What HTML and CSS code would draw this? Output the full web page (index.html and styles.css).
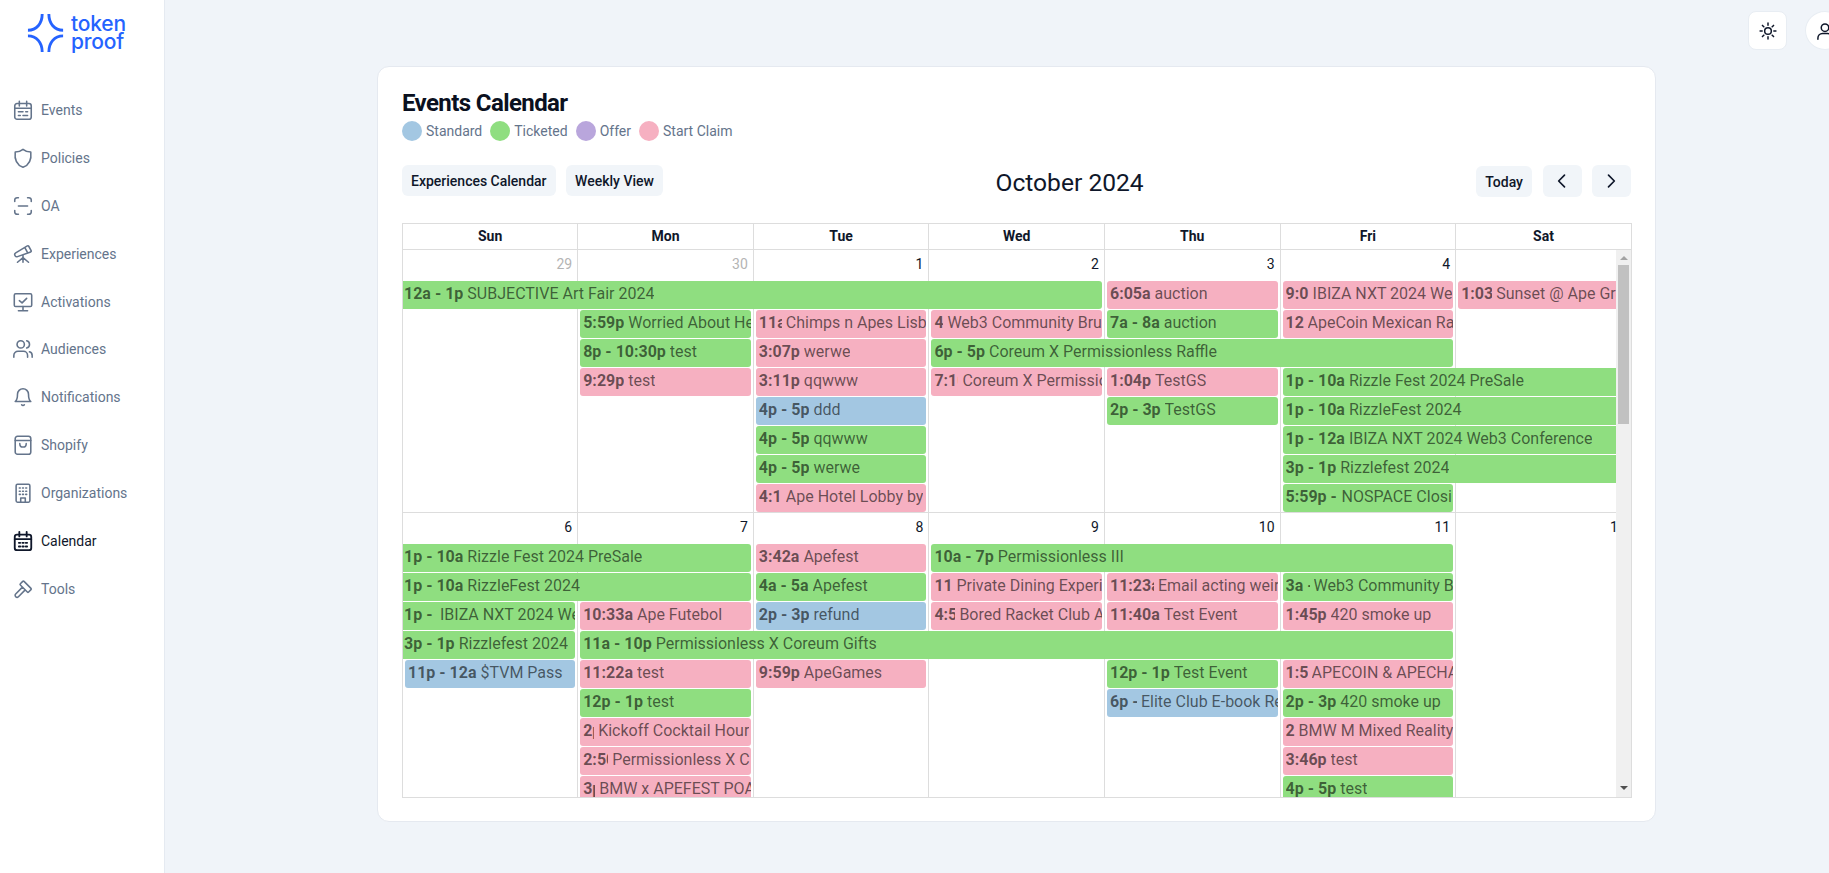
FILE: index.html
```html
<!DOCTYPE html>
<html lang="en">
<head>
<meta charset="utf-8">
<title>Events Calendar</title>
<link rel="stylesheet" href="styles.css">
</head>
<body>
<div class="app">
  <aside class="sidebar">
    <div class="logo">
      <svg class="logo-mark" viewBox="0 0 40 42" fill="none" stroke="#2563ff" stroke-width="3" stroke-linecap="butt">
        <path d="M16 0C16 10 10 17 1 17"/>
        <path d="M23 0C23 10 29 17 38 17"/>
        <path d="M1 23C10 23 16 30 16 40"/>
        <path d="M38 23C29 23 23 30 23 40"/>
      </svg>
      <div class="logo-text">token<br>proof</div>
    </div>
    <nav class="nav">
      <a class="nav-item">
        <svg class="nav-icon" viewBox="0 0 24 24"><rect x="3" y="5" width="18" height="17" rx="2.5"/><path d="M8 2.5v5M16 2.5v5M3 10h18M7 14h5M15 14h2M7 18h2M12 18h5"/></svg>
        <span>Events</span>
      </a>
      <a class="nav-item">
        <svg class="nav-icon" viewBox="0 0 24 24"><path d="M12 2.500c2.500 2 5.500 3 8.500 3C21.500 14 19 19.500 12 22 5 19.500 2.500 14 3.500 5.500c3 0 6-1 8.500-3z"/></svg>
        <span>Policies</span>
      </a>
      <a class="nav-item">
        <svg class="nav-icon" viewBox="0 0 24 24"><path d="M3 7V5.500A2.500 2.500 0 0 1 5.500 3H7M17 3h1.500A2.500 2.500 0 0 1 21 5.500V7M21 17v1.500a2.500 2.500 0 0 1-2.500 2.500H17M7 21H5.500A2.500 2.500 0 0 1 3 18.500V17M7 12h10"/></svg>
        <span>OA</span>
      </a>
      <a class="nav-item">
        <svg class="nav-icon" viewBox="0 0 24 24"><path d="M6 21l6-5 6 5M12 13v8M3.294 13.678l.166.281c.52.88 1.624 1.265 2.605.91l14.242-5.165a1.023 1.023 0 0 0 .565-1.456l-2.62-4.705a1.087 1.087 0 0 0-1.447-.42l-.056.032-12.694 7.618c-1.02.613-1.357 1.897-.76 2.905zM14 5l3 5.500"/></svg>
        <span>Experiences</span>
      </a>
      <a class="nav-item">
        <svg class="nav-icon" viewBox="0 0 24 24"><rect x="2.500" y="3" width="19" height="14" rx="1.500"/><path d="M8 10.500l3 2.500 5-5M12 17v4M7 21.500h10"/></svg>
        <span>Activations</span>
      </a>
      <a class="nav-item">
        <svg class="nav-icon" viewBox="0 0 24 24"><circle cx="9.500" cy="7" r="4"/><path d="M2 21v-2a4.500 4.500 0 0 1 4.500-4.500h6A4.500 4.500 0 0 1 17 19v2M16 3.100a4 4 0 0 1 0 7.800M22 21v-2a4 4 0 0 0-3-3.900"/></svg>
        <span>Audiences</span>
      </a>
      <a class="nav-item">
        <svg class="nav-icon" viewBox="0 0 24 24"><path d="M6 9a6 6 0 0 1 12 0c0 6 2.500 8 2.500 8h-17S6 15 6 9zM10.500 20.500a2 2 0 0 0 3 0"/></svg>
        <span>Notifications</span>
      </a>
      <a class="nav-item">
        <svg class="nav-icon" viewBox="0 0 24 24"><rect x="3.500" y="2.500" width="17" height="19.500" rx="2.500"/><path d="M3.500 7h17M8.500 10.500c0 5 7 5 7 0"/></svg>
        <span>Shopify</span>
      </a>
      <a class="nav-item">
        <svg class="nav-icon" viewBox="0 0 24 24"><rect x="4.500" y="2.500" width="15" height="19.500" rx="1.500"/><path d="M8 6.500h1M11.500 6.500h1M15 6.500h1M8 10h1M11.500 10h1M15 10h1M8 13.500h1M11.500 13.500h1M15 13.500h1M9.500 22v-4.500h5V22"/></svg>
        <span>Organizations</span>
      </a>
      <a class="nav-item is-active">
        <svg class="nav-icon" viewBox="0 0 24 24"><rect x="3" y="5" width="18" height="17" rx="2.500"/><path d="M8 2v5M16 2v5M3 10h18M7.500 14h1.500M11.300 14h1.500M15 14h1.500M7.500 18h1.500M11.300 18h1.500M15 18h1.500"/></svg>
        <span>Calendar</span>
      </a>
      <a class="nav-item">
        <svg class="nav-icon" viewBox="0 0 24 24"><path d="M11.414 10l-7.383 7.418a2.091 2.091 0 0 0 0 2.967 2.110 2.110 0 0 0 2.976 0l7.407-7.385M18.121 15.293l2.586-2.586a1 1 0 0 0 0-1.414l-7.586-7.586a1 1 0 0 0-1.414 0l-2.586 2.586a1 1 0 0 0 0 1.414l7.586 7.586a1 1 0 0 0 1.414 0z"/></svg>
        <span>Tools</span>
      </a>
    </nav>
  </aside>
  <main class="main">
    <header class="topbar">
      <button class="top-btn">
        <svg class="top-icon" viewBox="0 0 24 24"><circle cx="12" cy="12" r="4"/><path d="M12 2.500v2.500M12 19v2.500M2.500 12H5M19 12h2.500M5.300 5.300l1.700 1.700M17 17l1.700 1.700M5.300 18.700L7 17M17 7l1.700-1.700"/></svg>
      </button>
      <button class="avatar">
        <svg class="top-icon" viewBox="0 0 24 24"><circle cx="12" cy="8" r="4.500"/><path d="M3.500 22v-1.500A5.500 5.500 0 0 1 9 15h6a5.500 5.500 0 0 1 5.500 5.500V22"/></svg>
      </button>
    </header>
    <section class="card">
      <h1 class="card-title">Events Calendar</h1>
      <div class="legend">
        <span class="legend-item"><i class="dot blue"></i>Standard</span>
        <span class="legend-item"><i class="dot green"></i>Ticketed</span>
        <span class="legend-item"><i class="dot purple"></i>Offer</span>
        <span class="legend-item"><i class="dot pink"></i>Start Claim</span>
      </div>
      <div class="toolbar">
        <div class="tool-group group-start">
          <button class="btn">Experiences Calendar</button>
          <button class="btn">Weekly View</button>
        </div>
        <h2 class="month">October 2024</h2>
        <div class="tool-group">
          <button class="btn btn-today">Today</button>
          <button class="btn btn-icon"><svg class="chev" viewBox="0 0 24 24"><path d="M15 5l-7 7 7 7"/></svg></button>
          <button class="btn btn-icon"><svg class="chev" viewBox="0 0 24 24"><path d="M9 5l7 7-7 7"/></svg></button>
        </div>
      </div>
      <div class="cal">
        <div class="cal-head">
          <div class="head-cell">Sun</div><div class="head-cell">Mon</div><div class="head-cell">Tue</div><div class="head-cell">Wed</div><div class="head-cell">Thu</div><div class="head-cell">Fri</div><div class="head-cell">Sat</div>
        </div>
        <div class="cal-body">
          <div class="view">
            <div class="week week-a">
              <div class="day d1 other">29</div><div class="day d2 other">30</div><div class="day d3">1</div><div class="day d4">2</div><div class="day d5">3</div><div class="day d6">4</div><div class="day d7"></div>

              <div class="ev green r1 c1 s4 cl"><b>12a - 1p</b><span>SUBJECTIVE Art Fair 2024</span></div>
              <div class="ev pink r1 c5"><b>6:05a</b><span>auction</span></div>
              <div class="ev pink r1 c6"><b style="width:23px">9:0</b><span>IBIZA NXT 2024 We</span></div>
              <div class="ev pink r1 c7"><b style="width:31px">1:03</b><span>Sunset @ Ape Gra</span></div>

              <div class="ev green r2 c2"><b>5:59p</b><span>Worried About He</span></div>
              <div class="ev pink r2 c3"><b style="width:23px">11a</b><span>Chimps n Apes Lisb</span></div>
              <div class="ev pink r2 c4"><b style="width:9px">4</b><span>Web3 Community Bru</span></div>
              <div class="ev green r2 c5"><b>7a - 8a</b><span>auction</span></div>
              <div class="ev pink r2 c6"><b style="width:18px">12</b><span>ApeCoin Mexican Ra</span></div>

              <div class="ev green r3 c2"><b>8p - 10:30p</b><span>test</span></div>
              <div class="ev pink r3 c3"><b>3:07p</b><span>werwe</span></div>
              <div class="ev green r3 c4 s3"><b>6p - 5p</b><span>Coreum X Permissionless Raffle</span></div>

              <div class="ev pink r4 c2"><b>9:29p</b><span>test</span></div>
              <div class="ev pink r4 c3"><b>3:11p</b><span>qqwww</span></div>
              <div class="ev pink r4 c4"><b style="width:24px">7:10</b><span>Coreum X Permissio</span></div>
              <div class="ev pink r4 c5"><b>1:04p</b><span>TestGS</span></div>
              <div class="ev green r4 c6 s2 cr"><b>1p - 10a</b><span>Rizzle Fest 2024 PreSale</span></div>

              <div class="ev blue r5 c3"><b>4p - 5p</b><span>ddd</span></div>
              <div class="ev green r5 c5"><b>2p - 3p</b><span>TestGS</span></div>
              <div class="ev green r5 c6 s2 cr"><b>1p - 10a</b><span>RizzleFest 2024</span></div>

              <div class="ev green r6 c3"><b>4p - 5p</b><span>qqwww</span></div>
              <div class="ev green r6 c6 s2 cr"><b>1p - 12a</b><span>IBIZA NXT 2024 Web3 Conference</span></div>

              <div class="ev green r7 c3"><b>4p - 5p</b><span>werwe</span></div>
              <div class="ev green r7 c6 s2 cr"><b>3p - 1p</b><span>Rizzlefest 2024</span></div>

              <div class="ev pink r8 c3"><b style="width:23px">4:15</b><span>Ape Hotel Lobby by</span></div>
              <div class="ev green r8 c6"><b style="width:52px">5:59p -</b><span>NOSPACE Closi</span></div>
            </div>
            <div class="week week-b">
              <div class="day d1">6</div><div class="day d2">7</div><div class="day d3">8</div><div class="day d4">9</div><div class="day d5">10</div><div class="day d6">11</div><div class="day d7">12</div>

              <div class="ev green r1 c1 s2 cl"><b>1p - 10a</b><span>Rizzle Fest 2024 PreSale</span></div>
              <div class="ev pink r1 c3"><b>3:42a</b><span>Apefest</span></div>
              <div class="ev green r1 c4 s3"><b>10a - 7p</b><span>Permissionless III</span></div>

              <div class="ev green r2 c1 s2 cl"><b>1p - 10a</b><span>RizzleFest 2024</span></div>
              <div class="ev green r2 c3"><b>4a - 5a</b><span>Apefest</span></div>
              <div class="ev pink r2 c4"><b style="width:18px">11:</b><span>Private Dining Experi</span></div>
              <div class="ev pink r2 c5"><b style="width:44px">11:23a</b><span>Email acting weir</span></div>
              <div class="ev green r2 c6"><b style="width:24px">3a -</b><span>Web3 Community B</span></div>

              <div class="ev green r3 c1 cl"><b style="width:32px">1p -</b><span>IBIZA NXT 2024 We</span></div>
              <div class="ev pink r3 c2"><b>10:33a</b><span>Ape Futebol</span></div>
              <div class="ev blue r3 c3"><b>2p - 3p</b><span>refund</span></div>
              <div class="ev pink r3 c4"><b style="width:21px">4:5</b><span>Bored Racket Club A</span></div>
              <div class="ev pink r3 c5"><b>11:40a</b><span>Test Event</span></div>
              <div class="ev pink r3 c6"><b>1:45p</b><span>420 smoke up</span></div>

              <div class="ev green r4 c1 cl"><b>3p - 1p</b><span>Rizzlefest 2024</span></div>
              <div class="ev green r4 c2 s5"><b>11a - 10p</b><span>Permissionless X Coreum Gifts</span></div>

              <div class="ev blue r5 c1"><b>11p - 12a</b><span>$TVM Pass</span></div>
              <div class="ev pink r5 c2"><b>11:22a</b><span>test</span></div>
              <div class="ev pink r5 c3"><b>9:59p</b><span>ApeGames</span></div>
              <div class="ev green r5 c5"><b>12p - 1p</b><span>Test Event</span></div>
              <div class="ev pink r5 c6"><b style="width:22px">1:5</b><span>APECOIN &amp; APECHA</span></div>

              <div class="ev green r6 c2"><b>12p - 1p</b><span>test</span></div>
              <div class="ev blue r6 c5"><b style="width:27px">6p -</b><span>Elite Club E-book Re</span></div>
              <div class="ev green r6 c6"><b>2p - 3p</b><span>420 smoke up</span></div>

              <div class="ev pink r7 c2"><b style="width:11px">2p</b><span>Kickoff Cocktail Hour</span></div>
              <div class="ev pink r7 c6"><b style="width:9px">2</b><span>BMW M Mixed Reality</span></div>

              <div class="ev pink r8 c2"><b style="width:25px">2:50</b><span>Permissionless X C</span></div>
              <div class="ev pink r8 c6"><b>3:46p</b><span>test</span></div>

              <div class="ev pink r9 c2"><b style="width:12px">3p</b><span>BMW x APEFEST POA</span></div>
              <div class="ev green r9 c6"><b>4p - 5p</b><span>test</span></div>
            </div>
          </div>
          <div class="scrollbar">
            <div class="sb-arrow up"></div>
            <div class="sb-thumb"></div>
            <div class="sb-arrow down"></div>
          </div>
        </div>
      </div>
    </section>
  </main>
</div>
</body>
</html>
```
FILE: styles.css
```css
* { box-sizing: border-box; }
html, body { margin: 0; height: 100%; overflow: hidden; }
body { font-family: Roboto, "Liberation Sans", sans-serif; color: #0f172a; background: #f0f4f9; }
.app { display: flex; width: 1829px; height: 873px; overflow: hidden; }

/* sidebar */
.sidebar { width: 165px; flex-shrink: 0; background: #fff; border-right: 1px solid #e5eaf1; }
.logo { display: flex; align-items: flex-start; gap: 6px; padding: 14px 0 0 27px; height: 86px; }
.logo-mark { width: 38px; height: 40px; flex-shrink: 0; }
.logo-text { margin-top: 1px; font-family: Inter, Roboto, sans-serif; font-size: 21px; line-height: 18px; font-weight: 500; color: #2563ff; letter-spacing: -.2px; }
.nav { display: flex; flex-direction: column; }
.nav-item { display: flex; align-items: center; gap: 7px; height: 47.9px; padding-left: 12px; font-size: 14px; color: #64748b; }
.nav-item.is-active { color: #0f172a; }
.nav-icon { width: 22px; height: 22px; fill: none; stroke: #64748b; stroke-width: 1.7; stroke-linecap: round; stroke-linejoin: round; flex-shrink: 0; }
.is-active .nav-icon { stroke: #0f172a; stroke-width: 2; }

/* main */
.main { flex: 1; min-width: 0; }
.topbar { display: flex; justify-content: flex-end; gap: 18px; height: 39px; margin: 11px -16px 16px 0; }
.top-btn, .avatar { width: 39px; height: 39px; padding: 0; display: flex; align-items: center; justify-content: center; background: #fff; border: 1px solid #e8edf3; flex-shrink: 0; }
.top-btn { border-radius: 8px; }
.avatar { width: 40px; border-radius: 50%; }
.top-icon { width: 20px; height: 20px; fill: none; stroke: #0f172a; stroke-width: 1.8; stroke-linecap: round; stroke-linejoin: round; }

/* card */
.card { width: 1279px; height: 756px; margin-left: 212px; padding: 24px; background: #fff; border: 1px solid #e5e9f0; border-radius: 12px; }
.card-title { margin: 0; font-size: 24px; line-height: 24px; font-weight: 700; letter-spacing: -.6px; color: #0a1020; }
.legend { display: flex; gap: 8px; margin-top: 6px; height: 20px; }
.legend-item { display: flex; align-items: center; gap: 4px; font-size: 14px; color: #64748b; }
.dot { width: 20px; height: 20px; border-radius: 50%; }
.dot.blue { background: #a3c7e2; }
.dot.green { background: #8fde80; }
.dot.purple { background: #b9a6dc; }
.dot.pink { background: #f6b0c1; }

.toolbar { display: flex; justify-content: space-between; align-items: center; margin-top: 24px; height: 32px; }
.tool-group { display: flex; align-items: center; gap: 11px; }
.group-start { align-self: flex-start; gap: 10.5px; }
.btn { height: 31px; padding: 0 9px; border: 0; border-radius: 6px; background: #f1f5f9; font-family: inherit; font-size: 14px; font-weight: 500; color: #0f172a; }
.btn-today { align-self: flex-end; }
.btn-icon { width: 39px; height: 32px; padding: 0; display: flex; align-items: center; justify-content: center; }
.btn-icon + .btn-icon { margin-left: -1px; }
.chev { width: 20px; height: 20px; fill: none; stroke: #0f172a; stroke-width: 2; stroke-linecap: round; stroke-linejoin: round; }
.month { margin: 0; padding-top: 4px; font-size: 24.6px; line-height: 32px; font-weight: 400; color: #0f172a; }

/* calendar */
.cal { margin-top: 26px; width: 1230px; border-right: 1px solid #ddd; border-bottom: 1px solid #ddd; }
.cal-head { display: grid; grid-template-columns: 175.2px repeat(6, 175.6px); height: 27px; border-top: 1px solid #ddd; border-bottom: 1px solid #ddd; }
.head-cell { border-left: 1px solid #ddd; text-align: center; font-size: 14px; font-weight: 700; line-height: 25px; color: #0f172a; }
.cal-body { display: flex; height: 547px; }
.view { width: 1214px; height: 547px; overflow: hidden; flex-shrink: 0; }
.week { display: grid; grid-template-columns: 175.2px repeat(6, 175.6px); width: 1228.8px; }
.week-a { grid-template-rows: 31px repeat(7, 29px) 28px; }
.week-b { grid-template-rows: 31px repeat(9, 29px); border-top: 1px solid #ddd; }

.day { grid-row: 1 / -1; border-left: 1px solid #ddd; padding: 2px 5px 0 0; text-align: right; font-size: 14px; line-height: 24px; color: #0f172a; }
.day.other { color: #b4b4b4; }
.d1 { grid-column: 1; } .d2 { grid-column: 2; } .d3 { grid-column: 3; } .d4 { grid-column: 4; } .d5 { grid-column: 5; } .d6 { grid-column: 6; } .d7 { grid-column: 7; }

.ev { display: flex; height: 28px; min-width: 0; margin: 0 2px 0 3px; padding: 1px 0 0 3px; border-radius: 3px; font-size: 16px; line-height: 24px; white-space: nowrap; overflow: hidden; color: rgba(0, 0, 0, .58); }
.ev b { font-weight: 700; margin-right: 4px; overflow: hidden; flex-shrink: 0; }
.ev span { min-width: 0; overflow: hidden; }
.ev.green { background: #8fde80; }
.ev.pink { background: #f6b0c1; }
.ev.blue { background: #a3c7e2; }
.ev.cl { margin-left: 1px; padding-left: 1px; border-top-left-radius: 0; border-bottom-left-radius: 0; }
.ev.cr { margin-right: 0; border-top-right-radius: 0; border-bottom-right-radius: 0; }

.c1 { grid-column-start: 1; } .c2 { grid-column-start: 2; } .c3 { grid-column-start: 3; } .c4 { grid-column-start: 4; } .c5 { grid-column-start: 5; } .c6 { grid-column-start: 6; } .c7 { grid-column-start: 7; }
.s2 { grid-column-end: span 2; } .s3 { grid-column-end: span 3; } .s4 { grid-column-end: span 4; } .s5 { grid-column-end: span 5; }
.r1 { grid-row-start: 2; } .r2 { grid-row-start: 3; } .r3 { grid-row-start: 4; } .r4 { grid-row-start: 5; } .r5 { grid-row-start: 6; } .r6 { grid-row-start: 7; } .r7 { grid-row-start: 8; } .r8 { grid-row-start: 9; } .r9 { grid-row-start: 10; }

/* scrollbar */
.scrollbar { width: 15px; height: 547px; flex-shrink: 0; display: flex; flex-direction: column; align-items: center; background: #f0f0f0; }
.sb-thumb { width: 11px; height: 159px; background: #c1c1c1; }
.sb-arrow { width: 0; height: 0; border-left: 4px solid transparent; border-right: 4px solid transparent; }
.sb-arrow.up { margin: 6px 0 5px; border-bottom: 4px solid #a3a3a3; }
.sb-arrow.down { margin-top: auto; margin-bottom: 7px; border-top: 4px solid #505050; }
```
